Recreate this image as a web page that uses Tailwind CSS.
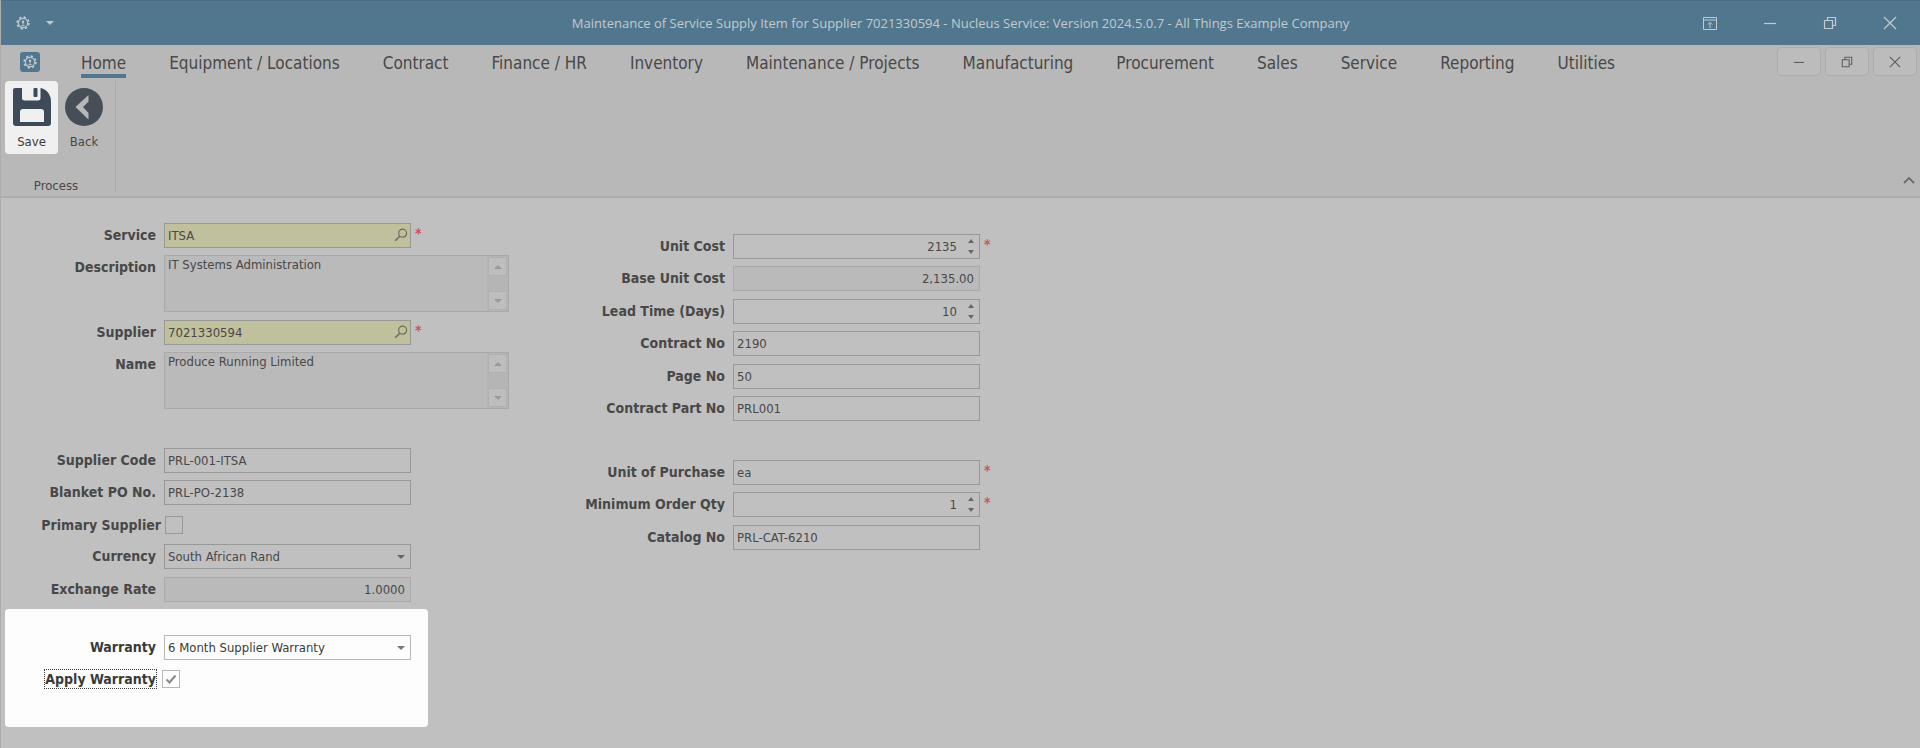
<!DOCTYPE html>
<html lang="en">

<head>
    <meta charset="UTF-8">
    <meta name="viewport" content="width=device-width, initial-scale=1.0">
    <title>Maintenance of Service Supply Item</title>

    <!-- Tailwind CSS CDN -->
    <script src="https://cdn.jsdelivr.net/npm/@tailwindcss/browser@4"></script>
</head>

<body class="min-h-screen flex flex-col bg-[#c0c0c0] border-l border-[#adadad] text-[13px] leading-4 text-[#484848] font-['DejaVu_Sans_Condensed','DejaVu_Sans',sans-serif]">

    <!-- Shared shapes -->
    <svg class="hidden" aria-hidden="true">
        <symbol id="gear" viewBox="0 0 14 14">
            <circle cx="7" cy="7" r="4.6" fill="none" stroke="currentColor" stroke-width="1.1" />
            <circle cx="7" cy="7" r="5.9" fill="none" stroke="currentColor" stroke-width="1.6" stroke-dasharray="2.3 2.33" />
            <circle cx="7" cy="5.8" r="1.2" fill="currentColor" />
            <path d="M7 6v2.5M5.5 9.500h3" stroke="currentColor" />
        </symbol>
        <symbol id="lens" viewBox="0 0 14 14">
            <circle cx="8.6" cy="5.2" r="4" fill="none" stroke="currentColor" stroke-width="1.2" />
            <path d="M5.8 8.2 1.2 12.8" stroke="currentColor" stroke-width="1.6" />
        </symbol>
        <symbol id="up" viewBox="0 0 8 4">
            <path d="M4 0 8 4H0z" fill="currentColor" />
        </symbol>
        <symbol id="down" viewBox="0 0 8 4">
            <path d="M0 0h8L4 4z" fill="currentColor" />
        </symbol>
        <symbol id="minimize" viewBox="0 0 14 14">
            <path d="M1 7.5h12" stroke="currentColor" stroke-width="1.2" />
        </symbol>
        <symbol id="restore" viewBox="0 0 14 14">
            <path d="M1.5 4.5h8v8h-8zM4.5 4.5v-3h8v8h-3" fill="none" stroke="currentColor" stroke-width="1.2" />
        </symbol>
        <symbol id="close" viewBox="0 0 14 14">
            <path d="M1 1l12 12M13 1 1 13" stroke="currentColor" stroke-width="1.3" />
        </symbol>
    </svg>

    <!-- Title bar -->
    <header class="h-[45px] flex items-center bg-[#51778f] text-[#c3c9cd] border-t border-[#4a6d83]">
        <div class="flex-1 flex items-center gap-4">
            <svg class="ml-[15px] w-[14px] h-[14px]"><use href="#gear" /></svg>
            <button aria-label="Customize toolbar"><svg class="w-2 h-1"><use href="#down" /></svg></button>
        </div>
        <h1 class="font-['Open_Sans',sans-serif]">Maintenance of Service Supply Item for Supplier 7021330594 - Nucleus Service: Version 2024.5.0.7 - All Things Example Company</h1>
        <div class="flex-1 flex justify-end">
            <button class="w-[60px] flex justify-center" aria-label="Ribbon display options">
                <svg class="w-[14px] h-[14px]" viewBox="0 0 14 14" fill="none" stroke="currentColor">
                    <path d="M.5 1.500h13v12H.5zM.5 4h13M7 12V6.500M4.800 8.500 7 6.300 9.200 8.500" />
                </svg>
            </button>
            <button class="w-[60px] flex justify-center" aria-label="Minimize"><svg class="w-[14px] h-[14px]"><use href="#minimize" /></svg></button>
            <button class="w-[60px] flex justify-center" aria-label="Restore"><svg class="w-[14px] h-[14px]"><use href="#restore" /></svg></button>
            <button class="w-[60px] flex justify-center" aria-label="Close"><svg class="w-[14px] h-[14px]"><use href="#close" /></svg></button>
        </div>
    </header>

    <!-- Ribbon -->
    <div class="bg-[#b8b8b8] border-b-2 border-[#adadad]">
        <div class="flex justify-between">
            <div class="flex items-start pl-[19px] pt-[7px]">
                <button class="w-5 h-5 rounded-[3px] bg-[#51778f] text-[#c3c9cd] flex items-center justify-center" aria-label="Application menu">
                    <svg class="w-[14px] h-[14px]"><use href="#gear" /></svg>
                </button>
                <nav class="flex gap-[43px] pl-[41px] text-[17px] leading-[22px]">
                    <a href="#" class="border-b-4 border-[#51778f]">Home</a>
                    <a href="#">Equipment / Locations</a>
                    <a href="#">Contract</a>
                    <a href="#">Finance / HR</a>
                    <a href="#">Inventory</a>
                    <a href="#">Maintenance / Projects</a>
                    <a href="#">Manufacturing</a>
                    <a href="#">Procurement</a>
                    <a href="#">Sales</a>
                    <a href="#">Service</a>
                    <a href="#">Reporting</a>
                    <a href="#">Utilities</a>
                </nav>
            </div>
            <div class="flex gap-1 pt-[2px] pr-[3px] text-[#5c5c5c]">
                <button class="w-11 h-[29px] flex items-center justify-center rounded-sm border border-[#adadad] bg-[#bcbcbc]" aria-label="Minimize form"><svg class="w-3 h-3"><use href="#minimize" /></svg></button>
                <button class="w-11 h-[29px] flex items-center justify-center rounded-sm border border-[#adadad] bg-[#bcbcbc]" aria-label="Restore form"><svg class="w-3 h-3"><use href="#restore" /></svg></button>
                <button class="w-11 h-[29px] flex items-center justify-center rounded-sm border border-[#adadad] bg-[#bcbcbc]" aria-label="Close form"><svg class="w-3 h-3"><use href="#close" /></svg></button>
            </div>
        </div>

        <div class="flex items-end justify-between pt-[3px] pb-1">
            <div class="flex flex-col pl-1 w-[115px] h-[111px] border-r border-[#a9a9a9]">
                <div class="flex">
                    <button class="w-[53px] h-[73px] pt-[7px] flex flex-col items-center gap-2 rounded bg-[#f0f0f0] text-[#3b3b3b]">
                        <svg class="w-[38px] h-[38px]" viewBox="0 0 38 38">
                            <path fill="#3c4a5a" fill-rule="evenodd" d="M2 0H9V10Q9 12.500 11.500 12.500H25Q27.500 12.500 27.500 10V0Q33 1 36 6 38 9 38 14V35Q38 38 35 38H3Q0 38 0 35V2Q0 0 2 0zM10 21Q7 21 7 24V34H31V24Q31 21 28 21z" />
                            <rect x="20.500" y="0" width="4" height="9" rx="1" fill="#3c4a5a" />
                        </svg>
                        Save
                    </button>
                    <button class="w-[52px] h-[73px] pt-[7px] flex flex-col items-center gap-2">
                        <svg class="w-[38px] h-[38px]" viewBox="0 0 38 38">
                            <circle cx="19" cy="19" r="19" fill="#474e57" />
                            <path fill="#b8b8b8" d="M23.500 7V13.500L18 19 23.500 25V31.500L10.500 19z" />
                        </svg>
                        Back
                    </button>
                </div>
                <div class="mt-auto pr-2 leading-3 text-center">Process</div>
            </div>
            <button class="p-2 pr-[5px] text-[#6c6c6c]" aria-label="Collapse ribbon">
                <svg class="w-3 h-2" viewBox="0 0 12 8"><path d="M1 7 6 2l5 5" fill="none" stroke="currentColor" stroke-width="1.800" /></svg>
            </button>
        </div>
    </div>

    <!-- Form -->
    <form class="flex items-start">
        <div class="w-[559px] pt-[25px]">
            <div class="flex odd:mb-[7px] even:mb-2 gap-2">
                <label for="service" class="w-[155px] text-right text-sm leading-[25px] font-bold">Service</label>
                <div class="relative">
                    <input id="service" value="ITSA" class="block w-[247px] h-[25px] px-[3px] border border-[#989898] bg-[#c0c09c]">
                    <button type="button" class="absolute right-[3px] top-[5px] text-[#6c6c60]" aria-label="Find service"><svg class="w-[14px] h-[14px]"><use href="#lens" /></svg></button>
                </div>
                <span class="-ml-1 text-sm leading-5 font-bold text-[#cc5555]">*</span>
            </div>
            <div class="flex odd:mb-[7px] even:mb-2 gap-2">
                <label for="description" class="w-[155px] text-right text-sm leading-[25px] font-bold">Description</label>
                <div class="flex w-[345px] h-[57px] border border-[#a9a9a9] bg-[#bababa]">
                    <textarea id="description" readonly class="flex-1 px-[3px] py-px resize-none overflow-hidden">IT Systems Administration</textarea>
                    <div class="w-[21px] px-px py-px flex flex-col justify-between bg-[#b5b5b5] text-[#9a9a9a]">
                        <button type="button" class="h-[19px] flex items-center justify-center border border-[#b0b0b0] bg-[#bebebe]" aria-label="Scroll up"><svg class="w-2 h-1"><use href="#up" /></svg></button>
                        <button type="button" class="h-[19px] flex items-center justify-center border border-[#b0b0b0] bg-[#bebebe]" aria-label="Scroll down"><svg class="w-2 h-1"><use href="#down" /></svg></button>
                    </div>
                </div>
            </div>
            <div class="flex odd:mb-[7px] even:mb-2 gap-2">
                <label for="supplier" class="w-[155px] text-right text-sm leading-[25px] font-bold">Supplier</label>
                <div class="relative">
                    <input id="supplier" value="7021330594" class="block w-[247px] h-[25px] px-[3px] border border-[#989898] bg-[#c0c09c]">
                    <button type="button" class="absolute right-[3px] top-[5px] text-[#6c6c60]" aria-label="Find supplier"><svg class="w-[14px] h-[14px]"><use href="#lens" /></svg></button>
                </div>
                <span class="-ml-1 text-sm leading-5 font-bold text-[#cc5555]">*</span>
            </div>
            <div class="flex odd:mb-[7px] even:mb-2 gap-2">
                <label for="name" class="w-[155px] text-right text-sm leading-[25px] font-bold">Name</label>
                <div class="flex w-[345px] h-[57px] border border-[#a9a9a9] bg-[#bababa]">
                    <textarea id="name" readonly class="flex-1 px-[3px] py-px resize-none overflow-hidden">Produce Running Limited</textarea>
                    <div class="w-[21px] px-px py-px flex flex-col justify-between bg-[#b5b5b5] text-[#9a9a9a]">
                        <button type="button" class="h-[19px] flex items-center justify-center border border-[#b0b0b0] bg-[#bebebe]" aria-label="Scroll up"><svg class="w-2 h-1"><use href="#up" /></svg></button>
                        <button type="button" class="h-[19px] flex items-center justify-center border border-[#b0b0b0] bg-[#bebebe]" aria-label="Scroll down"><svg class="w-2 h-1"><use href="#down" /></svg></button>
                    </div>
                </div>
            </div>

            <div class="pt-[31px]">
                <div class="flex odd:mb-[7px] even:mb-2 gap-2">
                    <label for="supplier-code" class="w-[155px] text-right text-sm leading-[25px] font-bold">Supplier Code</label>
                    <input id="supplier-code" value="PRL-001-ITSA" class="w-[247px] h-[25px] px-[3px] border border-[#989898]">
                </div>
                <div class="flex odd:mb-[7px] even:mb-2 gap-2">
                    <label for="blanket-po" class="w-[155px] text-right text-sm leading-[25px] font-bold">Blanket PO No.</label>
                    <input id="blanket-po" value="PRL-PO-2138" class="w-[247px] h-[25px] px-[3px] border border-[#989898]">
                </div>
                <div class="flex items-center odd:mb-[7px] even:mb-2 gap-1">
                    <label for="primary" class="w-[160px] text-right text-sm leading-6 font-bold">Primary Supplier</label>
                    <input id="primary" type="checkbox" class="appearance-none w-[18px] h-[18px] border border-[#989898]">
                </div>
                <div class="flex odd:mb-[7px] even:mb-2 gap-2">
                    <label for="currency" class="w-[155px] text-right text-sm leading-[25px] font-bold">Currency</label>
                    <div class="relative">
                        <select id="currency" class="block appearance-none w-[247px] h-[25px] px-[3px] border border-[#989898]">
                            <option>South African Rand</option>
                        </select>
                        <svg class="absolute right-[6px] top-[11px] w-2 h-1 text-[#666666] pointer-events-none"><use href="#down" /></svg>
                    </div>
                </div>
                <div class="flex odd:mb-[7px] even:mb-2 gap-2">
                    <label for="rate" class="w-[155px] text-right text-sm leading-[25px] font-bold">Exchange Rate</label>
                    <input id="rate" value="1.0000" readonly class="w-[247px] h-[25px] px-[5px] text-right border border-[#a9a9a9] bg-[#bababa]">
                </div>
            </div>

            <!-- Highlighted warranty block -->
            <div class="ml-1 w-[423px] pt-[26px] pb-9 rounded bg-[#fdfdfd] text-[#3a3a3a]">
                <div class="flex mb-[7px] gap-2">
                    <label for="warranty" class="w-[151px] text-right text-sm leading-[25px] font-bold">Warranty</label>
                    <div class="relative">
                        <select id="warranty" class="block appearance-none w-[247px] h-[25px] px-[3px] border border-[#b8b8b8]">
                            <option>6 Month Supplier Warranty</option>
                        </select>
                        <svg class="absolute right-[6px] top-[11px] w-2 h-1 text-[#777777] pointer-events-none"><use href="#down" /></svg>
                    </div>
                </div>
                <div class="flex items-center h-6 gap-[5px]">
                    <div class="w-[152px] flex justify-end">
                        <label for="apply" class="border border-dotted border-[#3a3a3a] text-sm leading-[18px] font-bold">Apply Warranty</label>
                    </div>
                    <div class="relative">
                        <input id="apply" type="checkbox" checked class="block appearance-none w-[18px] h-[18px] border border-[#b8b8b8]">
                        <svg class="absolute inset-0 w-[18px] h-[18px] pointer-events-none" viewBox="0 0 18 18"><path d="M4.500 9.500 7.500 12.500 13.500 5.500" fill="none" stroke="#888888" stroke-width="2" /></svg>
                    </div>
                </div>
            </div>
        </div>

        <div class="pt-9">
            <div class="flex odd:mb-[7px] even:mb-2 gap-2">
                <label for="unit-cost" class="w-[165px] text-right text-sm leading-[25px] font-bold">Unit Cost</label>
                <div class="relative">
                    <input id="unit-cost" type="number" value="2135" class="block w-[247px] h-[25px] pl-[3px] pr-[22px] text-right border border-[#989898] [&::-webkit-inner-spin-button]:appearance-none">
                    <svg class="absolute right-[5px] top-[5px] w-2 h-[15px] text-[#666666]" viewBox="0 0 8 15"><path d="M4 0 7 4H1zM1 11h6l-3 4z" fill="currentColor" /></svg>
                </div>
                <span class="-ml-1 text-sm leading-5 font-bold text-[#cc5555]">*</span>
            </div>
            <div class="flex odd:mb-[7px] even:mb-2 gap-2">
                <label for="base-cost" class="w-[165px] text-right text-sm leading-[25px] font-bold">Base Unit Cost</label>
                <input id="base-cost" value="2,135.00" readonly class="w-[247px] h-[25px] px-[5px] text-right border border-[#a9a9a9] bg-[#bababa]">
            </div>
            <div class="flex odd:mb-[7px] even:mb-2 gap-2">
                <label for="lead-time" class="w-[165px] text-right text-sm leading-[25px] font-bold">Lead Time (Days)</label>
                <div class="relative">
                    <input id="lead-time" type="number" value="10" class="block w-[247px] h-[25px] pl-[3px] pr-[22px] text-right border border-[#989898] [&::-webkit-inner-spin-button]:appearance-none">
                    <svg class="absolute right-[5px] top-[5px] w-2 h-[15px] text-[#666666]" viewBox="0 0 8 15"><path d="M4 0 7 4H1zM1 11h6l-3 4z" fill="currentColor" /></svg>
                </div>
            </div>
            <div class="flex odd:mb-[7px] even:mb-2 gap-2">
                <label for="contract-no" class="w-[165px] text-right text-sm leading-[25px] font-bold">Contract No</label>
                <input id="contract-no" value="2190" class="w-[247px] h-[25px] px-[3px] border border-[#989898]">
            </div>
            <div class="flex odd:mb-[7px] even:mb-2 gap-2">
                <label for="page-no" class="w-[165px] text-right text-sm leading-[25px] font-bold">Page No</label>
                <input id="page-no" value="50" class="w-[247px] h-[25px] px-[3px] border border-[#989898]">
            </div>
            <div class="flex odd:mb-[7px] even:mb-2 gap-2">
                <label for="part-no" class="w-[165px] text-right text-sm leading-[25px] font-bold">Contract Part No</label>
                <input id="part-no" value="PRL001" class="w-[247px] h-[25px] px-[3px] border border-[#989898]">
            </div>

            <div class="pt-[31px]">
                <div class="flex odd:mb-[7px] even:mb-2 gap-2">
                    <label for="unit" class="w-[165px] text-right text-sm leading-[25px] font-bold">Unit of Purchase</label>
                    <input id="unit" value="ea" class="w-[247px] h-[25px] px-[3px] border border-[#989898]">
                    <span class="-ml-1 text-sm leading-5 font-bold text-[#cc5555]">*</span>
                </div>
                <div class="flex odd:mb-[7px] even:mb-2 gap-2">
                    <label for="min-qty" class="w-[165px] text-right text-sm leading-[25px] font-bold">Minimum Order Qty</label>
                    <div class="relative">
                        <input id="min-qty" type="number" value="1" class="block w-[247px] h-[25px] pl-[3px] pr-[22px] text-right border border-[#989898] [&::-webkit-inner-spin-button]:appearance-none">
                        <svg class="absolute right-[5px] top-[5px] w-2 h-[15px] text-[#666666]" viewBox="0 0 8 15"><path d="M4 0 7 4H1zM1 11h6l-3 4z" fill="currentColor" /></svg>
                    </div>
                    <span class="-ml-1 text-sm leading-5 font-bold text-[#cc5555]">*</span>
                </div>
                <div class="flex odd:mb-[7px] even:mb-2 gap-2">
                    <label for="catalog-no" class="w-[165px] text-right text-sm leading-[25px] font-bold">Catalog No</label>
                    <input id="catalog-no" value="PRL-CAT-6210" class="w-[247px] h-[25px] px-[3px] border border-[#989898]">
                </div>
            </div>
        </div>
    </form>

</body>

</html>
